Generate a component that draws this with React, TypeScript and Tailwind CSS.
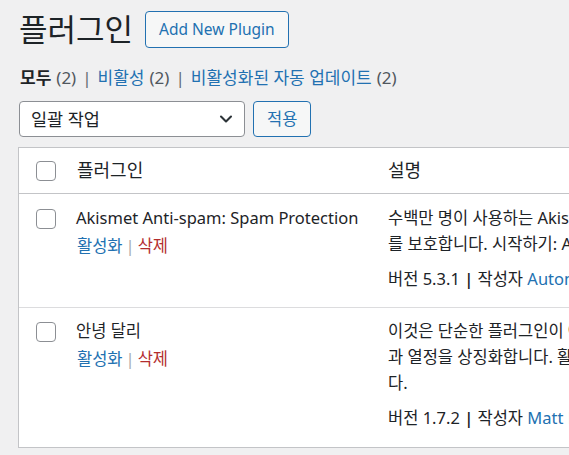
import { ChevronDown } from "lucide-react";

const font = { fontFamily: '"Noto Sans", "Noto Sans CJK KR", sans-serif' };

function Checkbox() {
  return (
    <span className="block h-[20px] w-[20px] rounded-[4px] border border-[#8c8f94] bg-white" />
  );
}

type Plugin = {
  name: string;
  desc: string[];
  version: string;
  author: string;
};

const plugins: Plugin[] = [
  {
    name: "Akismet Anti-spam: Spam Protection",
    desc: [
      "수백만 명이 사용하는 Akismet은 블로그를 스팸으로부터 지키는 가장 좋은 방법으로 사이트",
      "를 보호합니다. 시작하기: Akismet 설정 페이지에서 API 키를 설정하세요.",
    ],
    version: "5.3.1",
    author: "Automattic - Anti-spam Team",
  },
  {
    name: "안녕 달리",
    desc: [
      "이것은 단순한 플러그인이 아닙니다. 루이 암스트롱이 부른 두 단어로 요약되는 한 세대의 희망",
      "과 열정을 상징화합니다. 활성화하면 관리 화면 오른쪽 위에서 노래 가사를 무작위로 보게 됩니",
      "다.",
    ],
    version: "1.7.2",
    author: "Matt Mullenweg",
  },
];

export default function App() {
  return (
    <div
      className="h-[455px] w-[569px] overflow-hidden bg-[#f0f0f1] text-[#1d2327]"
      style={font}
    >
      <div className="px-[18px] pt-[11px]">
        <div className="flex items-center gap-[12px]">
          <h1 className="pl-[1px] text-[31px] leading-[37px] font-normal">플러그인</h1>
          <button className="h-[37px] shrink-0 rounded-[4px] border border-[#2271b1] bg-[#f6f7f7] px-[13px] text-[15.5px] text-[#2271b1]">
            Add New Plugin
          </button>
        </div>

        <div className="mt-[17px] flex items-center whitespace-nowrap text-[17px] leading-[26px] text-[#50575e]">
          <span className="pl-[2px] font-semibold text-[#1d2327]">모두</span>
          <span className="ml-[5px]">(2)</span>
          <span className="mx-[6px] text-[#646970]">|</span>
          <span className="text-[#2271b1]">비활성</span>
          <span className="ml-[5px]">(2)</span>
          <span className="mx-[6px] text-[#646970]">|</span>
          <span className="text-[#2271b1]">비활성화된 자동 업데이트</span>
          <span className="ml-[5px]">(2)</span>
        </div>

        <div className="mt-[10px] flex items-center gap-[8px] pl-[1px]">
          <div className="flex h-[36px] w-[226px] shrink-0 items-center justify-between rounded-[4px] border border-[#8c8f94] bg-white pl-[11px] pr-[8px] text-[17.5px]">
            <span>일괄 작업</span>
            <ChevronDown size={20} strokeWidth={2.5} className="text-[#2c3338]" />
          </div>
          <button className="h-[36px] shrink-0 rounded-[4px] border border-[#2271b1] bg-[#f6f7f7] px-[13px] text-[16.5px] text-[#2271b1]">
            적용
          </button>
        </div>

        <div className="mt-[10px] w-[760px] border border-[#c3c4c7] bg-white">
          <div className="flex h-[46px] items-center border-b border-[#c3c4c7] text-[18px]">
            <div className="w-[50px] shrink-0 pl-[17px]">
              <Checkbox />
            </div>
            <div className="w-[310px] shrink-0 pl-[8px]">플러그인</div>
            <div className="pl-[9px]">설명</div>
          </div>

          {plugins.map((p, i) => (
            <div
              key={p.name}
              className={`flex ${
                i === 0 ? "border-b border-[#dcdcde] pb-[15px] pt-[11px]" : "pb-[16px] pt-[10px]"
              }`}
            >
              <div className="w-[50px] shrink-0 pl-[17px] pt-[4px]">
                <Checkbox />
              </div>
              <div className="w-[310px] shrink-0 pl-[7px]">
                <div className="whitespace-nowrap text-[16.5px] leading-[26px]">{p.name}</div>
                <div className="mt-[2px] pl-[1px] text-[16.5px] leading-[26px]">
                  <span className="text-[#2271b1]">활성화</span>
                  <span className="mx-[3px] text-[#a7aaad]">|</span>
                  <span className="text-[#b32d2e]">삭제</span>
                </div>
              </div>
              <div className="shrink-0 pl-[9px] text-[16.5px]">
                <div className="whitespace-nowrap leading-[26px]">
                  {p.desc.map((line) => (
                    <div key={line}>{line}</div>
                  ))}
                </div>
                <div className="mt-[9px] whitespace-nowrap leading-[26px]">
                  버전 {p.version} <span className="font-semibold">|</span> 작성자{" "}
                  <span className="text-[#2271b1]">{p.author}</span>
                </div>
              </div>
            </div>
          ))}
        </div>
      </div>
    </div>
  );
}
